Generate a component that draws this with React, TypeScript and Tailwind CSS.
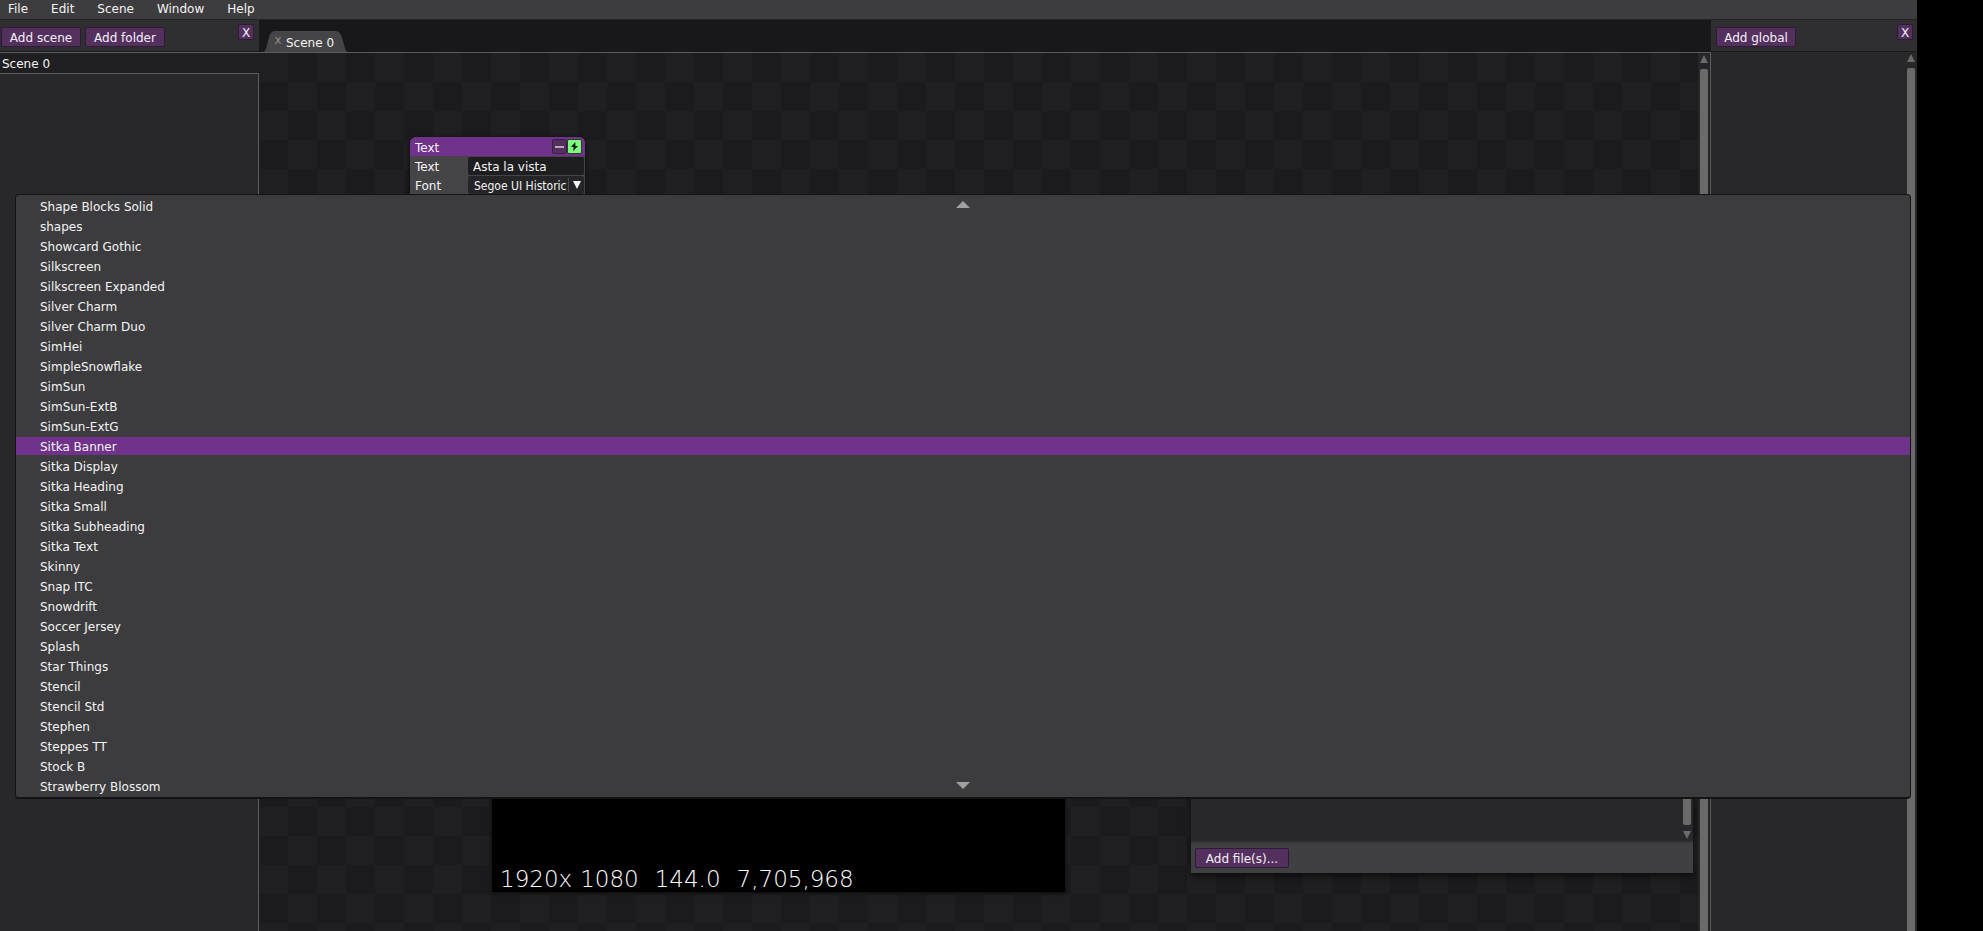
import { clsx } from "clsx"
import type { ReactNode } from "react"

const menus = ["File", "Edit", "Scene", "Window", "Help"]

const fonts = [
  "Shape Blocks Solid",
  "shapes",
  "Showcard Gothic",
  "Silkscreen",
  "Silkscreen Expanded",
  "Silver Charm",
  "Silver Charm Duo",
  "SimHei",
  "SimpleSnowflake",
  "SimSun",
  "SimSun-ExtB",
  "SimSun-ExtG",
  "Sitka Banner",
  "Sitka Display",
  "Sitka Heading",
  "Sitka Small",
  "Sitka Subheading",
  "Sitka Text",
  "Skinny",
  "Snap ITC",
  "Snowdrift",
  "Soccer Jersey",
  "Splash",
  "Star Things",
  "Stencil",
  "Stencil Std",
  "Stephen",
  "Steppes TT",
  "Stock B",
  "Strawberry Blossom",
]

function PurpleButton({ children, className }: { children: ReactNode; className?: string }) {
  return (
    <button
      className={clsx(
        "rounded-xs border border-[#2d1b38] bg-[#54305f] whitespace-nowrap text-[#f6f0f8]",
        className,
      )}
    >
      {children}
    </button>
  )
}

function CloseButton({ label }: { label: string }) {
  return (
    <PurpleButton className="h-4 w-4 pt-px text-xs leading-3">
      <span aria-label={label}>X</span>
    </PurpleButton>
  )
}

function Triangle({ down, className }: { down?: boolean; className: string }) {
  return (
    <svg viewBox="0 0 10 10" preserveAspectRatio="none" className={clsx("block shrink-0 fill-current", className)}>
      <path d={down ? "M0 0H10L5 10Z" : "M5 0L10 10H0Z"} />
    </svg>
  )
}

function Scrollbar({ className }: { className?: string }) {
  return (
    <div className={clsx("flex flex-col items-center gap-1.5 text-[#6a6a6a]", className)}>
      <Triangle className="h-2 w-2" />
      <div className="w-2 flex-1 rounded-t-xs bg-[#6a6a6b]" />
    </div>
  )
}

function ScenePanel() {
  return (
    <aside className="flex w-[259px] shrink-0 flex-col">
      <div className="flex h-8 items-start justify-between border-b border-[#19191a] bg-[#2f2f31] pr-[5px] pl-px">
        <div className="flex gap-1 pt-[7px]">
          <PurpleButton className="h-5 w-20 pt-px">Add scene</PurpleButton>
          <PurpleButton className="h-5 w-20 pt-px">Add folder</PurpleButton>
        </div>
        <div className="pt-1">
          <CloseButton label="Close scenes" />
        </div>
      </div>
      <div className="h-[22px] border-y border-[#5c5c5d] bg-[#1f1f21] pl-0.5 leading-[22px]">Scene 0</div>
      <div className="flex-1 border-r border-[#5c5c5d] bg-[#28282a]" />
    </aside>
  )
}

function TextNode() {
  return (
    <div className="absolute top-[84px] left-[151px] w-[175px] rounded-t-md bg-[#454547] pb-6 shadow-[0_1px_4px_#000a]">
      <div className="flex h-[19px] items-center rounded-t-md bg-[#70328a] pr-[3px] pl-[5px]">
        <span className="flex-1 pt-0.5">Text</span>
        <button
          aria-label="Collapse"
          className="flex h-[15px] w-[15px] items-center justify-center rounded-xs border border-[#3d1f4b] bg-[#54305f]"
        >
          <span className="h-0.5 w-[9px] bg-[#b9a8c0]" />
        </button>
        <button
          aria-label="Toggle"
          className="flex h-[15px] w-[15px] items-center justify-center rounded-xs border border-[#2d3a2d] bg-[#7dfc7d]"
        >
          <svg viewBox="0 0 10 10" className="h-[9px] w-[9px] fill-[#101c10]">
            <path d="M6 0L1 5.5H4L3.500 10L9 4.500H6Z" />
          </svg>
        </button>
      </div>
      <div className="grid grid-cols-[53px_1fr] gap-y-px pt-px pr-px pl-[5px]">
        <label htmlFor="node-text" className="h-[18px] leading-[20px]">Text</label>
        <input
          id="node-text"
          defaultValue="Asta la vista"
          className="h-[18px] w-full rounded-xs bg-[#1e1e20] px-[5px] pt-0.5"
        />
        <label htmlFor="node-font" className="h-[18px] leading-[20px]">Font</label>
        <div className="relative flex h-[18px]">
          <select
            id="node-font"
            defaultValue="Segoe UI Historic"
            className="w-full appearance-none rounded-xs bg-[#252527] pt-0.5 pl-1.5 font-['DejaVu_Sans_Condensed','DejaVu_Sans',sans-serif] text-xs"
          >
            <option>Segoe UI Historic</option>
          </select>
          <div className="pointer-events-none absolute inset-y-0.5 right-0 flex w-4 items-center justify-center border-l border-[#4a4a4c]">
            <Triangle down className="h-2 w-2" />
          </div>
        </div>
      </div>
    </div>
  )
}

function PreviewNode() {
  return (
    <div className="absolute top-[480px] left-[233px] flex h-[359px] w-[573px] items-end bg-black pl-2 text-[23px] leading-[26px] font-extralight text-white shadow-[0_1px_4px_#000a]">
      <span className="mr-2">1920x</span>
      <span className="mr-4">1080</span>
      <span className="mr-4">144.0</span>
      <span>7,705,968</span>
    </div>
  )
}

function FilesNode() {
  return (
    <div className="absolute top-[480px] left-[932px] flex h-[340px] w-[502px] flex-col bg-[#28282a] shadow-[0_3px_6px_#0009]">
      <div className="flex flex-1 flex-col items-end gap-1.5 pr-0.5 pb-0.5 text-[#6a6a6a]">
        <div className="w-2 flex-1 rounded-b-xs bg-[#6a6a6b]" />
        <Triangle down className="h-2 w-2" />
      </div>
      <div className="flex h-8 items-start border-t-2 border-[#343436] bg-[#404042] px-1 pt-[5px]">
        <PurpleButton className="h-5 w-[94px] pt-px">Add file(s)...</PurpleButton>
      </div>
    </div>
  )
}

function Workspace() {
  return (
    <main className="flex min-w-0 flex-1 flex-col">
      <div className="flex h-[33px] items-end border-b border-[#5c5c5d] bg-[#18181a] pl-[5px]">
        <div className="relative flex h-[21px] w-[83px] items-center">
          <svg viewBox="0 0 83 21" className="absolute inset-0 fill-[#454547]">
            <path d="M0 21C5 16 3 0 11 0H72C79 0 79 16 83 21Z" />
          </svg>
          <button aria-label="Close tab" className="relative mb-1 ml-2 w-3 text-xs leading-3 text-[#8a8a8b]">x</button>
          <span className="relative ml-0.5 pt-0.5">Scene 0</span>
        </div>
      </div>
      <div className="flex min-h-0 flex-1">
        <div className="relative flex-1 overflow-hidden bg-[conic-gradient(#1b1b1d_25%,#1f1f21_0_50%,#1b1b1d_0_75%,#1f1f21_0)] bg-size-[58px_58px]">
          <TextNode />
          <PreviewNode />
          <FilesNode />
        </div>
        <Scrollbar className="w-[13px] border-r border-[#5c5c5d] bg-[#262628] pt-0.5" />
      </div>
    </main>
  )
}

function GlobalPanel() {
  return (
    <aside className="flex w-[206px] shrink-0 flex-col bg-[#28282a]">
      <div className="flex h-8 items-start justify-between border-b border-[#19191a] bg-[#2f2f31] pr-1 pl-[5px]">
        <div className="pt-[7px]">
          <PurpleButton className="h-5 w-20 pt-px">Add global</PurpleButton>
        </div>
        <div className="pt-1">
          <CloseButton label="Close globals" />
        </div>
      </div>
      <div className="flex flex-1 justify-end pr-0.5">
        <Scrollbar className="pt-0.5" />
      </div>
    </aside>
  )
}

function FontMenu() {
  return (
    <div className="absolute top-[194px] right-1.5 left-[15px] rounded-sm border border-b-2 border-[#131314] bg-[#3c3c3e] py-0.5">
      <ul role="listbox" aria-label="Font" className="flex flex-col gap-0.5">
        {fonts.map((font) => (
          <li
            key={font}
            role="option"
            aria-selected={font === "Sitka Banner"}
            className={clsx("h-[18px] pl-6 leading-[20px]", font === "Sitka Banner" && "bg-[#70328a]")}
          >
            {font}
          </li>
        ))}
      </ul>
      <div className="absolute inset-x-0 top-1.5 flex justify-center text-[#a0a0a0]">
        <Triangle className="h-[7px] w-3.5" />
      </div>
      <div className="absolute inset-x-0 bottom-2 flex justify-center text-[#a0a0a0]">
        <Triangle down className="h-[7px] w-3.5" />
      </div>
    </div>
  )
}

export default function App() {
  return (
    <div className="h-screen bg-black pr-[66px] font-['DejaVu_Sans',sans-serif] text-xs text-[#f4f4f4]">
      <div className="relative flex h-full flex-col">
        <nav className="flex h-5 items-start gap-[23px] border-b border-[#232324] bg-[#3d3d3f] pl-2">
          {menus.map((menu) => (
            <button key={menu} className="h-[17px]">{menu}</button>
          ))}
        </nav>
        <div className="flex min-h-0 flex-1">
          <ScenePanel />
          <Workspace />
          <GlobalPanel />
        </div>
        <FontMenu />
      </div>
    </div>
  )
}
